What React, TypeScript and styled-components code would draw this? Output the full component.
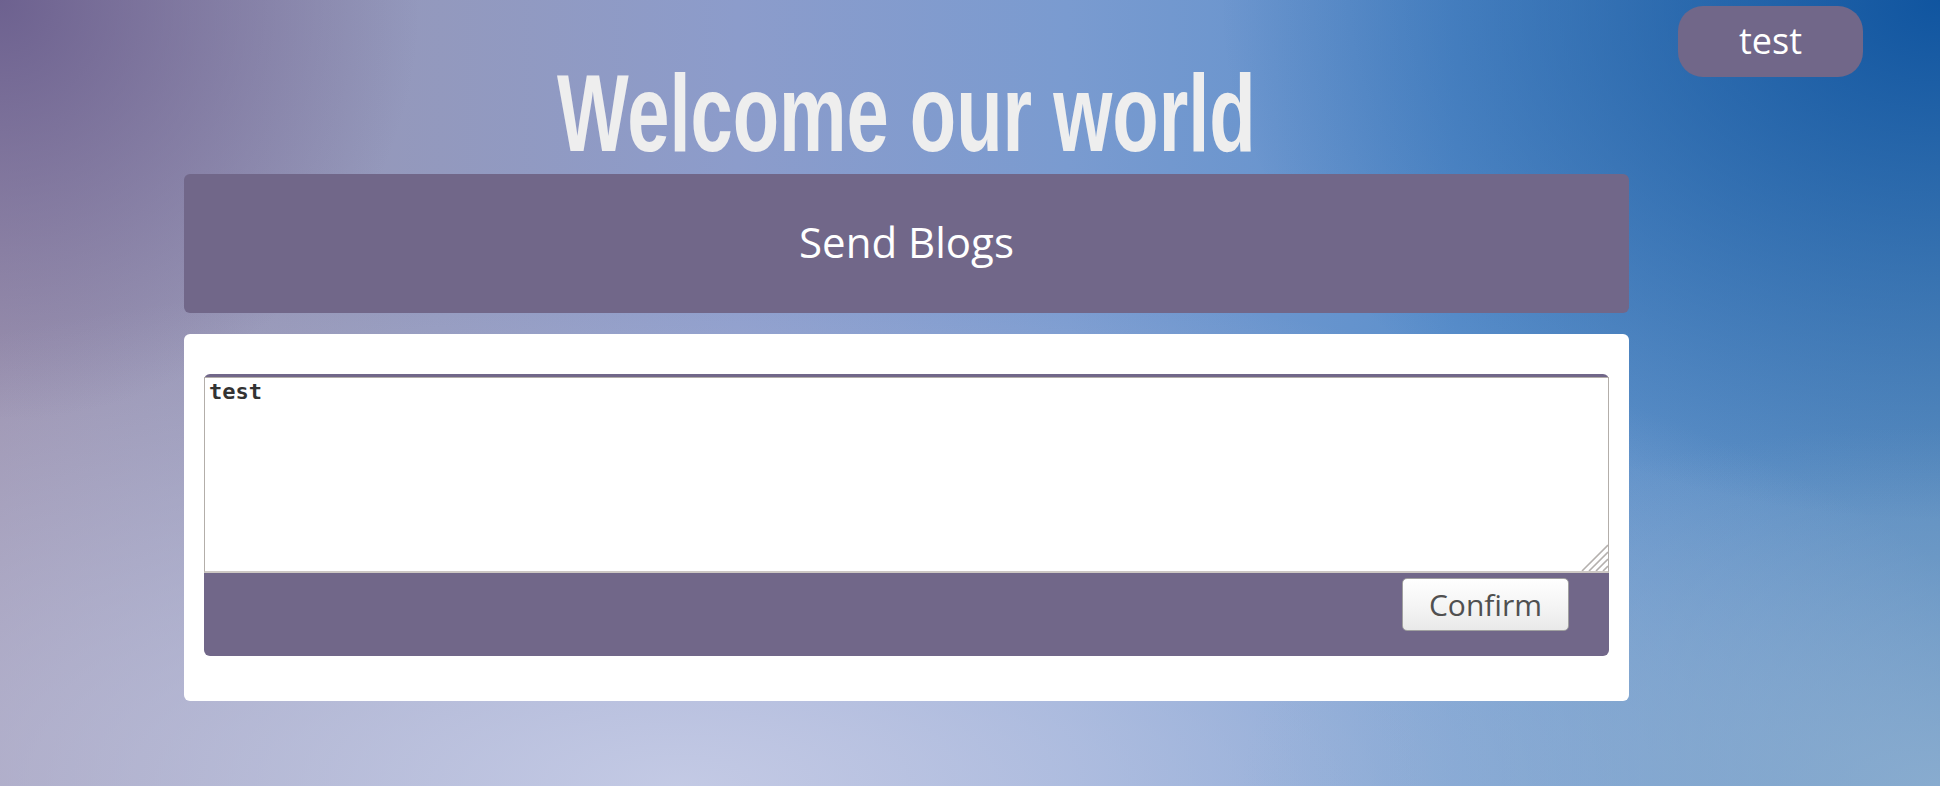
import React from "react";
import styled, { createGlobalStyle } from "styled-components";

const GlobalStyle = createGlobalStyle`
  html, body {
    margin: 0;
    padding: 0;
  }
  body {
    font-family: "Open Sans", "Noto Sans", sans-serif;
  }
  * {
    box-sizing: border-box;
  }
`;

const Page = styled.div`
  display: flex;
  align-items: flex-start;
  gap: 49px;
  min-height: 100vh;
  padding-left: 184px;
  background:
    radial-gradient(ellipse 720px 520px at 100% 0%, rgba(12, 82, 158, 0.95), rgba(12, 82, 158, 0) 100%),
    radial-gradient(ellipse 420px 420px at 0% 0%, rgba(104, 92, 140, 0.9), rgba(104, 92, 140, 0) 100%),
    radial-gradient(ellipse 700px 360px at 100% 100%, rgba(140, 174, 208, 0.9), rgba(140, 174, 208, 0) 100%),
    radial-gradient(ellipse 1400px 520px at 35% 100%, rgba(198, 204, 230, 0.95), rgba(198, 204, 230, 0) 100%),
    linear-gradient(90deg, #9c93b0 0%, #9598ba 18%, #8c9ccb 38%, #7a9bd0 55%, #5c90cc 75%, #5b8dc0 100%);
`;

const Main = styled.main`
  display: flex;
  flex-direction: column;
  width: 1445px;
`;

const Title = styled.h1`
  margin: 58px 0 6px;
  height: 110px;
  text-align: center;
  font-family: "Liberation Sans", Arial, sans-serif;
  font-weight: 700;
  font-size: 110px;
  line-height: 110px;
  color: #eeeeee;
  white-space: nowrap;
`;

const TitleText = styled.span`
  display: inline-block;
  transform: scaleX(0.69);
  transform-origin: center;
`;

const Banner = styled.div`
  display: flex;
  align-items: center;
  justify-content: center;
  height: 139px;
  margin-bottom: 21px;
  border-radius: 6px;
  background: #716789;
  color: #ffffff;
  font-family: "Open Sans", "Noto Sans", sans-serif;
  font-size: 42px;
  font-weight: 500;
  padding-bottom: 4px;
`;

const Card = styled.section`
  padding: 40px 20px 45px;
  border-radius: 6px;
  background: #ffffff;
`;

const Composer = styled.div`
  display: flex;
  flex-direction: column;
  padding-top: 3px;
  border-radius: 6px;
  background: #716789;
`;

const EditorWrap = styled.div`
  position: relative;
`;

const Editor = styled.textarea`
  display: block;
  width: 100%;
  height: 196px;
  margin: 0;
  padding: 1px 4px;
  border: 1px solid #b3aeaa;
  border-bottom: 2px solid #cdc8c4;
  background: #ffffff;
  color: #333333;
  font-family: "DejaVu Sans Mono", "Liberation Mono", monospace;
  font-weight: 700;
  font-size: 22px;
  resize: none;
  outline: none;
`;

const Grip = styled.svg`
  position: absolute;
  right: 1px;
  bottom: 2px;
  width: 27px;
  height: 27px;
  pointer-events: none;
`;

const ComposerBar = styled.div`
  display: flex;
  justify-content: flex-end;
  height: 83px;
  padding: 5px 40px 0 0;
`;

const ConfirmButton = styled.button`
  width: 167px;
  height: 53px;
  padding: 0;
  border: 1px solid #a0a0a0;
  border-radius: 5px;
  background: linear-gradient(180deg, #ffffff 0%, #f5f5f5 50%, #e9e9e9 100%);
  color: #505050;
  font-family: "Open Sans", "Noto Sans", sans-serif;
  font-size: 30px;
  cursor: pointer;
`;

const Aside = styled.aside`
  padding-top: 6px;
`;

const UserButton = styled.button`
  width: 185px;
  height: 71px;
  padding: 0 0 3px;
  border: none;
  border-radius: 25px;
  background: #716789;
  color: #ffffff;
  font-family: "Open Sans", "Noto Sans", sans-serif;
  font-size: 36px;
  font-weight: 500;
  cursor: pointer;
`;

export default function App() {
  return (
    <>
      <GlobalStyle />
      <Page>
        <Main>
          <Title>
            <TitleText>Welcome our world</TitleText>
          </Title>
          <Banner>Send Blogs</Banner>
          <Card>
            <Composer>
              <EditorWrap>
                <Editor defaultValue="test" />
                <Grip viewBox="0 0 27 27">
                  <g stroke="#b4b0ae" strokeWidth="1.6">
                    <line x1="27" y1="1" x2="1" y2="27" />
                    <line x1="27" y1="8" x2="8" y2="27" />
                    <line x1="27" y1="15" x2="15" y2="27" />
                    <line x1="27" y1="22" x2="22" y2="27" />
                  </g>
                </Grip>
              </EditorWrap>
              <ComposerBar>
                <ConfirmButton>Confirm</ConfirmButton>
              </ComposerBar>
            </Composer>
          </Card>
        </Main>
        <Aside>
          <UserButton>test</UserButton>
        </Aside>
      </Page>
    </>
  );
}
